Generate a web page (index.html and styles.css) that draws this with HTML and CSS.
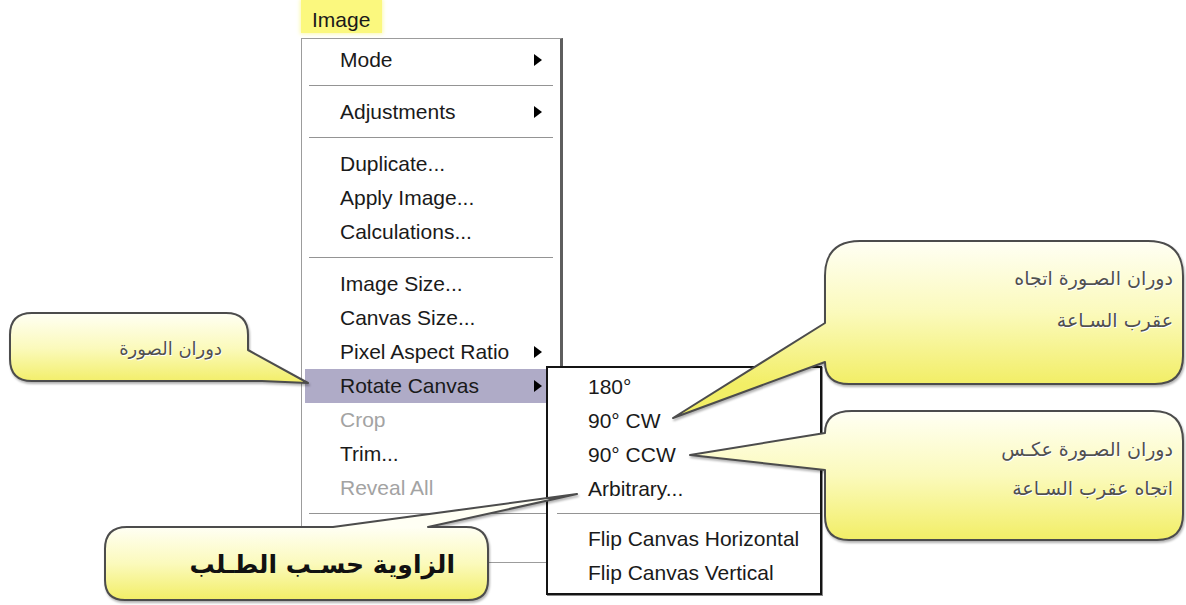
FILE: index.html
```html
<!DOCTYPE html>
<html lang="en">
<head>
  <meta charset="UTF-8" />
  <title>Rotate Canvas</title>
  <link rel="stylesheet" href="styles.css">
</head>
<body>
  <div class="stage">
    <div class="menubar">
      <div class="menu-title">Image</div>
      <ul class="menu main-menu">
        <li class="item sub">Mode</li>
        <li class="sep"></li>
        <li class="item sub">Adjustments</li>
        <li class="sep"></li>
        <li class="item">Duplicate...</li>
        <li class="item">Apply Image...</li>
        <li class="item">Calculations...</li>
        <li class="sep"></li>
        <li class="item">Image Size...</li>
        <li class="item">Canvas Size...</li>
        <li class="item sub">Pixel Aspect Ratio</li>
        <li class="item sub active">Rotate Canvas</li>
        <li class="item off">Crop</li>
        <li class="item">Trim...</li>
        <li class="item off">Reveal All</li>
        <li class="sep"></li>
        <li class="item">Trap...</li>
      </ul>
    </div>

    <ul class="menu submenu">
      <li class="item">180°</li>
      <li class="item">90° CW</li>
      <li class="item">90° CCW</li>
      <li class="item">Arbitrary...</li>
      <li class="sep"></li>
      <li class="item">Flip Canvas Horizontal</li>
      <li class="item">Flip Canvas Vertical</li>
    </ul>

    <!-- callout balloons -->
    <svg class="callouts" width="1186" height="605" viewBox="0 0 1186 605">
      <defs>
        <linearGradient id="glow" x1="0" y1="0" x2="0" y2="1">
          <stop offset="0" stop-color="#fffff4" />
          <stop offset="0.5" stop-color="#fbfabc" />
          <stop offset="1" stop-color="#f2ee66" />
        </linearGradient>
        <linearGradient id="glowA" href="#glow" gradientUnits="userSpaceOnUse" x1="0" y1="313" x2="0" y2="383" />
        <linearGradient id="glowB" href="#glow" gradientUnits="userSpaceOnUse" x1="0" y1="241" x2="0" y2="384" />
        <linearGradient id="glowC" href="#glow" gradientUnits="userSpaceOnUse" x1="0" y1="411" x2="0" y2="540" />
        <linearGradient id="glowD" href="#glow" gradientUnits="userSpaceOnUse" x1="0" y1="527" x2="0" y2="600" />
      </defs>
      <path fill="url(#glowA)" d="M32 313 H226 Q248 313 248 335 V350 L308 383 L262 381 H32 Q10 381 10 359 V335 Q10 313 32 313 Z" />
      <path fill="url(#glowB)" d="M860 241 H1148 Q1183 241 1183 276 V356 Q1183 384 1155 384 H849 Q825 384 825 362 L673 418 L825 323 V276 Q825 241 860 241 Z" />
      <path fill="url(#glowC)" d="M852 411 H1153 Q1183 411 1183 441 V514 Q1183 540 1157 540 H849 Q825 540 825 516 V470 L690 455 L825 433 Q825 411 852 411 Z" />
      <path fill="url(#glowD)" d="M127 527 H333 L577 494 L428 527 H466 Q488 527 488 549 V580 Q488 600 468 600 H125 Q105 600 105 580 V549 Q105 527 127 527 Z" />
    </svg>

    <div class="note note-left">دوران الصورة</div>
    <div class="note note-cw">دوران الصـورة اتجاه<br>عقرب السـاعة</div>
    <div class="note note-ccw">دوران الصـورة عكـس<br>اتجاه عقرب السـاعة</div>
    <div class="note note-free">الزاوية حسـب الطـلب</div>
  </div>
</body>
</html>
```

FILE: styles.css
```css
body {
  margin: 0;
  background: #fff;
  font-family: 'Liberation Sans', Arial, sans-serif;
  color: #1a1a1a;
}

.stage {
  position: relative;
  width: 1186px;
  height: 605px;
  overflow: hidden;
  padding-left: 301px;
  box-sizing: border-box;
}

.menubar {
  display: flex;
  flex-direction: column;
  align-items: flex-start;
}

.menu-title {
  background: #fbf87e;
  box-shadow: 0 0 4px 1px #fbf9b0;
  font-size: 21px;
  line-height: 27px;
  height: 27px;
  padding: 6px 12px 0 11px;
  margin-bottom: 5px;
}

.menu {
  list-style: none;
  margin: 0;
  background: #fff;
  box-sizing: border-box;
}

.main-menu {
  width: 262px;
  padding: 4px 0 5px;
  border: 1px solid #9c9c9c;
  border-right: 3px solid #5e5e5e;
}

.item {
  display: flex;
  align-items: center;
  justify-content: space-between;
  height: 34px;
  line-height: 34px;
  font-size: 21px;
  white-space: nowrap;
}

.main-menu .item {
  margin: 0 3px;
  padding: 0 15px 0 35px;
}

.item.sub::after {
  content: "";
  border-left: 8px solid #000;
  border-top: 6px solid transparent;
  border-bottom: 6px solid transparent;
}

.item.active {
  background: #afabc7;
}

.item.off {
  color: #a3a3a3;
}

.sep {
  height: 1px;
  margin: 8px 7px 9px;
  background: #949494;
}

.submenu {
  position: absolute;
  left: 546px;
  top: 366px;
  width: 276px;
  padding: 2px 0 3px;
  border: 2px solid #141414;
  box-shadow: 1px 1px 0 #8a8a8a;
}

.submenu .item {
  padding-left: 40px;
}

.submenu .sep {
  margin: 7px 0 8px 9px;
}

.callouts {
  position: absolute;
  left: 0;
  top: 0;
  pointer-events: none;
}

.callouts path {
  stroke: #4c4c4c;
  stroke-width: 2;
  stroke-linejoin: round;
  filter: drop-shadow(1px 2px 1px rgba(0, 0, 0, 0.3));
}

.note {
  position: absolute;
  direction: rtl;
  text-align: right;
  font-family: 'DejaVu Sans', sans-serif;
  font-size: 19px;
  color: #505050;
  text-shadow: 1px 1px 0 #fff;
  white-space: nowrap;
}

.note-left {
  top: 335px;
  right: 964px;
  font-size: 18px;
  line-height: 28px;
}

.note-cw {
  top: 257px;
  right: 13px;
  line-height: 42px;
}

.note-ccw {
  top: 430px;
  right: 13px;
  line-height: 39px;
}

.note-free {
  top: 548px;
  right: 731px;
  font-size: 25px;
  font-weight: bold;
  line-height: 34px;
  color: #111;
  text-shadow: none;
}
```
